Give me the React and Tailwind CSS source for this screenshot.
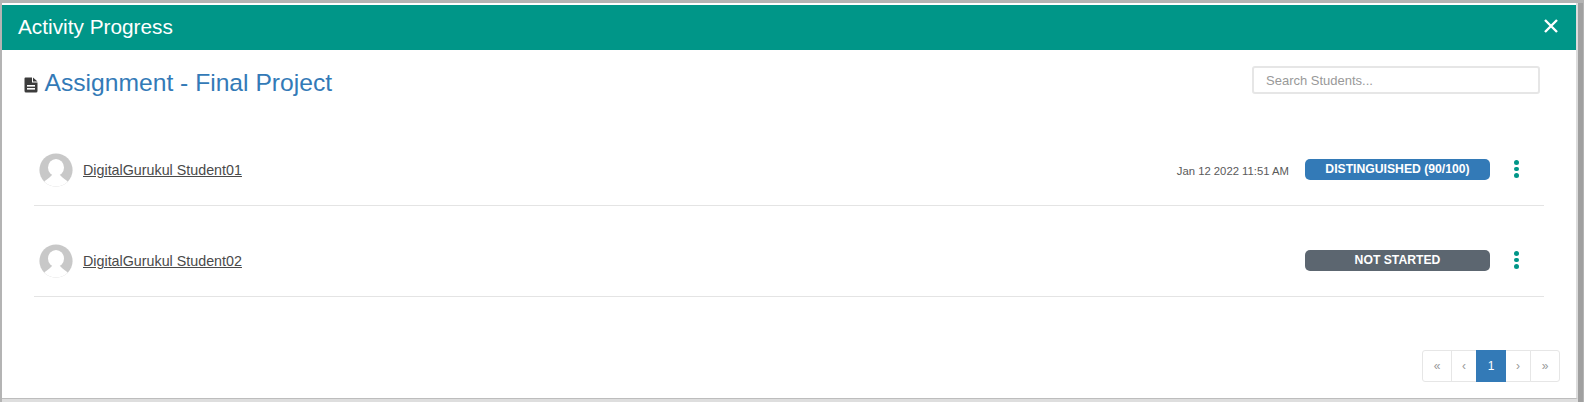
import React from "react";

function Avatar({ id }) {
  return (
    <svg width="34" height="34" viewBox="0 0 34 34" className="shrink-0 mt-[2px]">
      <defs>
        <clipPath id={id}><circle cx="17" cy="17" r="16.6" /></clipPath>
      </defs>
      <circle cx="17" cy="17" r="16.6" fill="#c8c8c8" />
      <g clipPath={`url(#${id})`}>
        <ellipse cx="17" cy="14.5" rx="8" ry="8.6" fill="#ffffff" />
        <path d="M0 36 L4.5 29.5 C7 26.5 10 25.5 13 22 L21 22 C24 25.5 27 26.5 29.5 29.5 L34 36 Z" fill="#ffffff" />
      </g>
    </svg>
  );
}

function Dots() {
  return (
    <div className="flex flex-col gap-[2px] w-[5px] ml-[24px]">
      <span className="block w-[5px] h-[4.5px] rounded-full bg-[#009688]" />
      <span className="block w-[5px] h-[4.5px] rounded-full bg-[#009688]" />
      <span className="block w-[5px] h-[4.5px] rounded-full bg-[#009688]" />
    </div>
  );
}

function Row({ id, name, date, label, color }) {
  return (
    <div className="h-[91px] ml-[32px] mr-[32px] border-b border-[#e4e4e4] flex items-center pl-[5px] pr-[25px] pt-[18px] shrink-0">
      <Avatar id={id} />
      <a className="ml-[10px] mt-[4px] text-[14.3px] text-[#4a4a4a] underline cursor-pointer">{name}</a>
      <span className="ml-auto mt-[4px] text-[11.3px] text-[#5a5a5a] mr-[16px]">{date}</span>
      <span className={`w-[185px] h-[21px] rounded-[5px] text-white text-[12.2px] font-bold flex items-center justify-center ${color}`}>{label}</span>
      <Dots />
    </div>
  );
}

function Page({ children, active, narrow }) {
  return (
    <a className={`h-[32px] flex items-center justify-center border text-[12px] -ml-px first:ml-0 first:rounded-l-[3px] last:rounded-r-[3px] ${narrow ? "w-[26px]" : "w-[30px]"} ${active ? "bg-[#337ab7] border-[#337ab7] text-white z-10" : "bg-white border-[#e6e6e6] text-[#999]"}`}>{children}</a>
  );
}

export default function App() {
  return (
    <div className="w-[1584px] h-[402px] bg-[#b4b4b4] pt-[3px] pl-[2px] pr-[1px] font-['Liberation_Sans',Arial,sans-serif] overflow-hidden">
      <div className="h-full flex flex-col border-r-[5px] border-[#a0a0a0]">
        <div className="flex-1 min-h-0 bg-white pt-[2px] flex flex-col border-r-2 border-b border-r-[#dcdcdc] border-b-[#bdbdbd]">
          <div className="h-[45px] bg-[#009688] shrink-0 flex items-center justify-between pl-[16px] pr-[17px]">
            <span className="text-white text-[20.8px] mt-[-1px]">Activity Progress</span>
            <svg width="16" height="16" viewBox="0 0 16 16" className="mt-[-4px]">
              <path d="M2 2 L14 14 M14 2 L2 14" stroke="#ffffff" strokeWidth="2.4" fill="none" />
            </svg>
          </div>
          <div className="flex items-start justify-between pl-[22px] pr-[36px] pt-[17px] h-[65px] shrink-0">
            <div className="flex items-center">
              <svg width="14" height="16" viewBox="0 0 14 16" className="mt-[3px]">
                <path d="M1.5 0.5 H8 V5.5 H13.5 V14 Q13.5 15.5 12 15.5 H2 Q0.5 15.5 0.5 14 V1.5 Q0.5 0.5 1.5 0.5 Z" fill="#3c3c3c" />
                <path d="M9 0.5 L13.5 4.5 H9 Z" fill="#3c3c3c" />
                <rect x="3" y="8" width="8" height="1.6" fill="#fff" />
                <rect x="3" y="11" width="8" height="1.6" fill="#fff" />
              </svg>
              <span className="ml-[6.5px] text-[24.65px] leading-[32px] text-[#337ab7]">Assignment - Final Project</span>
            </div>
            <input
              placeholder="Search Students..."
              className="w-[288px] h-[28px] mt-[-1px] border-2 border-[#e6e6e6] rounded-[3px] px-[12px] text-[13px] outline-none placeholder:text-[#999]"
            />
          </div>
          <Row id="avatarA" name="DigitalGurukul Student01" date="Jan 12 2022 11:51 AM" label="DISTINGUISHED (90/100)" color="bg-[#337ab7]" />
          <Row id="avatarB" name="DigitalGurukul Student02" date="" label="NOT STARTED" color="bg-[#5c6670]" />
          <div className="flex-1 flex items-end justify-end pr-[16px] pb-[16px]">
            <div className="flex">
              <Page>«</Page>
              <Page narrow>‹</Page>
              <Page active>1</Page>
              <Page narrow>›</Page>
              <Page>»</Page>
            </div>
          </div>
        </div>
        <div className="h-[3px] shrink-0 bg-[#dedede]" />
      </div>
    </div>
  );
}
